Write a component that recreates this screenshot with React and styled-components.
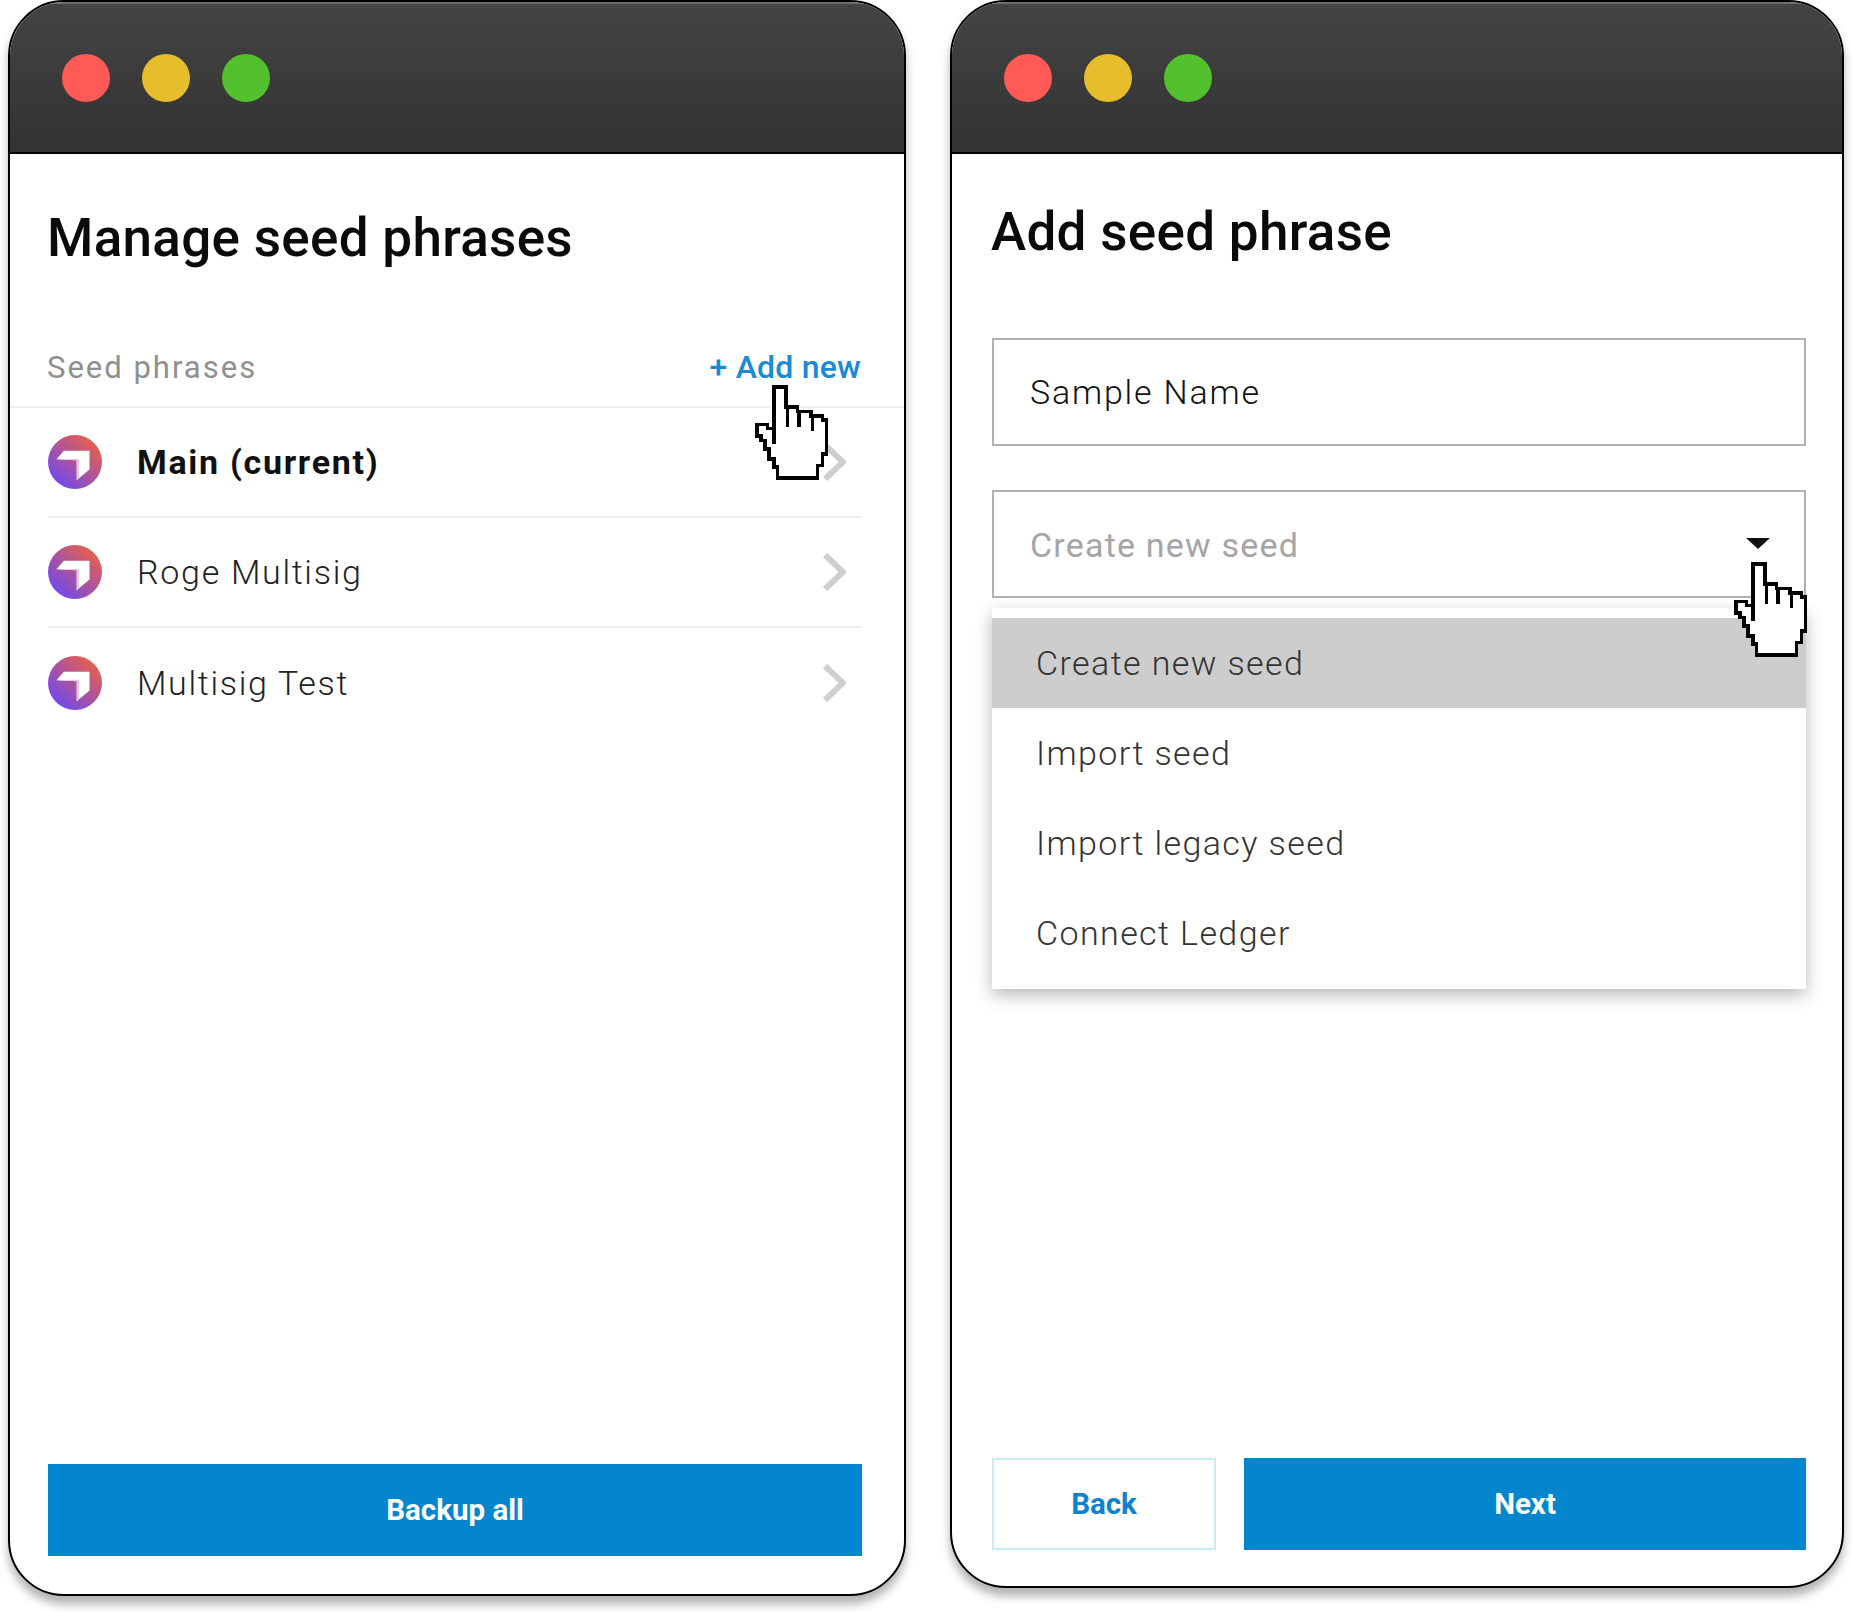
import React from "react";
import styled, { createGlobalStyle } from "styled-components";

const seeds = [
  { name: "Main (current)", current: true },
  { name: "Roge Multisig" },
  { name: "Multisig Test" },
];

const options = ["Create new seed", "Import seed", "Import legacy seed", "Connect Ledger"];

function TrafficLights() {
  return (
    <TitleBar>
      <Light $color="#ff5a55" />
      <Light $color="#e6bd2a" />
      <Light $color="#53c02d" />
    </TitleBar>
  );
}

function SeedLogo() {
  return (
    <LogoSvg viewBox="0 0 160 160">
      <defs>
        <linearGradient id="seedGrad" x1="0.15" y1="0.9" x2="0.85" y2="0.1">
          <stop offset="0" stopColor="#7048ee" />
          <stop offset="1" stopColor="#e8604a" />
        </linearGradient>
      </defs>
      <circle cx="80" cy="80" r="80" fill="url(#seedGrad)" />
      <path d="M25 72 L47 47 H123 V102 L85 134 V75 Z" fill="#fff" />
      <path d="M25 72 L85 75 V134 L92 128 V70 Z" fill="#e6c4dc" />
    </LogoSvg>
  );
}

function HandCursor({ className }) {
  return (
    <HandSvg className={className} viewBox="0 0 222 284" shapeRendering="crispEdges">
      <path
        d="M57 12 V6 H92 V66 H127 V79 H167 V92 H202 V104 H214 V206 H202 V241 H187 V278 H67 V246 H57 V222 H42 V192 H30 V166 H17 V152 H5 V118 H37 V130 H57 Z"
        fill="#fff"
        stroke="#000"
        strokeWidth="11"
      />
      <path d="M57 12 V176 M97 66 V126 M132 79 V126 M172 92 V138" fill="none" stroke="#000" strokeWidth="11" />
    </HandSvg>
  );
}

export default function App() {
  return (
    <>
      <GlobalStyle />
      <Page>
        <Window $width={898} $height={1596}>
          <TrafficLights />
          <Title $top={54} $left={37}>Manage seed phrases</Title>
          <SectionRow>
            <SectionLabel>Seed phrases</SectionLabel>
            <AddNew>+ Add new</AddNew>
            <ListCursor />
          </SectionRow>
          <SeedList>
            {seeds.map((s) => (
              <SeedRow key={s.name}>
                <SeedLogo />
                <SeedName $current={s.current}>{s.name}</SeedName>
                <Chevron viewBox="0 0 24 38">
                  <path d="M3 2 L21 19 L3 36" fill="none" stroke="#ccd0d2" strokeWidth="6" />
                </Chevron>
              </SeedRow>
            ))}
          </SeedList>
          <LeftFooter>
            <PrimaryButton>Backup all</PrimaryButton>
          </LeftFooter>
        </Window>

        <Window $width={894} $height={1588}>
          <TrafficLights />
          <Title $top={48} $left={39}>Add seed phrase</Title>
          <Form>
            <NameField>Sample Name</NameField>
            <SelectBox>
              <span>Create new seed</span>
              <Caret />
              <SelectCursor />
            </SelectBox>
            <Menu>
              {options.map((o, i) => (
                <MenuItem key={o} $active={i === 0}>
                  {o}
                </MenuItem>
              ))}
            </Menu>
          </Form>
          <RightFooter>
            <BackButton>Back</BackButton>
            <NextButton>Next</NextButton>
          </RightFooter>
        </Window>
      </Page>
    </>
  );
}

const GlobalStyle = createGlobalStyle`
  html, body {
    margin: 0;
    background: #fff;
  }
  * {
    box-sizing: border-box;
  }
  body {
    font-family: Roboto, "Liberation Sans", sans-serif;
    color: #222;
  }
`;

const Page = styled.div`
  display: flex;
  align-items: flex-start;
  gap: 44px;
  width: 1852px;
  height: 1612px;
  padding-left: 8px;
`;

const Window = styled.div`
  display: flex;
  flex-direction: column;
  width: ${(p) => p.$width}px;
  height: ${(p) => p.$height}px;
  background: #fff;
  border: 2px solid #000;
  border-radius: 56px;
  overflow: hidden;
  box-shadow: 0 8px 10px rgba(0, 0, 0, 0.3);
`;

const TitleBar = styled.div`
  display: flex;
  align-items: center;
  gap: 32px;
  flex: none;
  height: 152px;
  padding: 0 0 0 52px;
  background: linear-gradient(#444444, #323232);
  border-top: 2px solid #6c6c6c;
  border-bottom: 2px solid #000;
`;

const Light = styled.div`
  width: 48px;
  height: 48px;
  border-radius: 50%;
  background: ${(p) => p.$color};
`;

const Title = styled.h1`
  margin: ${(p) => p.$top}px 0 0 ${(p) => p.$left}px;
  font-size: 53px;
  line-height: 60px;
  letter-spacing: 0.3px;
  font-weight: 500;
  color: #0a0a0a;
`;

const SectionRow = styled.div`
  position: relative;
  display: flex;
  align-items: center;
  justify-content: space-between;
  height: 82px;
  margin-top: 58px;
  padding: 2px 43px 0 37px;
  border-bottom: 2px solid #eeeeee;
`;

const SectionLabel = styled.span`
  font-size: 31px;
  letter-spacing: 2px;
  color: #8f8f8f;
`;

const AddNew = styled.span`
  font-size: 32px;
  font-weight: 500;
  letter-spacing: 0.2px;
  color: #1a8ad4;
`;

const ListCursor = styled(HandCursor)`
  position: absolute;
  right: 75px;
  top: 59px;
`;

const HandSvg = styled.svg`
  width: 74px;
  height: 95px;
  z-index: 2;
`;

const SeedList = styled.div`
  display: flex;
  flex-direction: column;
  margin: 0 42px 0 38px;
`;

const SeedRow = styled.div`
  display: flex;
  align-items: center;
  height: 110px;
  border-bottom: 2px solid #eeeeee;
  &:last-child {
    border-bottom: 0;
  }
`;

const LogoSvg = styled.svg`
  flex: none;
  width: 54px;
  height: 54px;
`;

const SeedName = styled.span`
  flex: 1;
  margin-left: 35px;
  font-size: 34px;
  letter-spacing: 1.7px;
  font-weight: ${(p) => (p.$current ? 700 : 300)};
  color: ${(p) => (p.$current ? "#111" : "#222")};
`;

const Chevron = styled.svg`
  flex: none;
  width: 24px;
  height: 38px;
  margin-right: 16px;
`;

const LeftFooter = styled.div`
  display: flex;
  margin: auto 42px 38px 38px;
`;

const PrimaryButton = styled.div`
  display: flex;
  align-items: center;
  justify-content: center;
  flex: 1;
  height: 92px;
  background: #0386ce;
  color: #fff;
  font-size: 29.5px;
  font-weight: 700;
`;

const Form = styled.div`
  display: flex;
  flex-direction: column;
  margin: 76px 36px 0 40px;
`;

const Field = styled.div`
  display: flex;
  align-items: center;
  height: 108px;
  padding-left: 36px;
  border: 2px solid #b0b0b0;
  font-size: 34px;
`;

const NameField = styled(Field)`
  font-weight: 300;
  letter-spacing: 1.8px;
  color: #111;
`;

const SelectBox = styled(Field)`
  position: relative;
  justify-content: space-between;
  margin-top: 44px;
  padding-top: 2px;
  padding-right: 34px;
  letter-spacing: 1.2px;
  color: #a5a5a5;
`;

const Caret = styled.div`
  width: 0;
  height: 0;
  margin-top: -4px;
  border-left: 12px solid transparent;
  border-right: 12px solid transparent;
  border-top: 11px solid #111;
`;

const SelectCursor = styled(HandCursor)`
  position: absolute;
  right: -4px;
  top: 70px;
`;

const Menu = styled.div`
  display: flex;
  flex-direction: column;
  margin-top: 10px;
  padding: 10px 0 11px;
  background: #fff;
  box-shadow: 0 6px 16px rgba(0, 0, 0, 0.28);
`;

const MenuItem = styled.div`
  display: flex;
  align-items: center;
  height: 90px;
  padding-left: 44px;
  background: ${(p) => (p.$active ? "#cdcdcd" : "transparent")};
  font-size: 34px;
  font-weight: 300;
  letter-spacing: 1.4px;
  color: #333;
`;

const RightFooter = styled.div`
  display: flex;
  gap: 28px;
  margin: auto 36px 36px 40px;
`;

const BackButton = styled.div`
  display: flex;
  align-items: center;
  justify-content: center;
  width: 224px;
  height: 92px;
  border: 2px solid #cfe8f6;
  color: #0d82ce;
  font-size: 29.5px;
  font-weight: 700;
`;

const NextButton = styled(PrimaryButton)``;
